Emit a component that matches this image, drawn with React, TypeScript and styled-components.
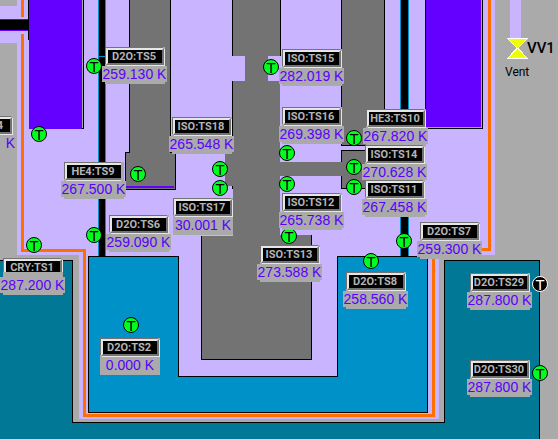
import React from "react";
import styled, { createGlobalStyle, css } from "styled-components";

const color = {
  panel: "#aaaaaa",
  vacuum: "#c8b4ff",
  shield: "#6400ff",
  heat: "#ff6e00",
  steel: "#737373",
  water: "#007896",
  heavy: "#0091c8",
  ok: "#00ff1e",
  valve: "#f0ff00",
};

const GlobalStyle = createGlobalStyle`
  body {
    margin: 0;
    background: ${color.panel};
  }
`;

const Synoptic = styled.main`
  position: relative;
  min-height: 100vh;
  overflow: hidden;
  background: ${color.panel};
  font-family: "Liberation Sans", Arial, sans-serif;
`;

const Drawing = styled.svg`
  display: block;
`;

const Sensor = styled.section<{ $x: number; $y: number }>`
  position: absolute;
  left: ${(p) => p.$x}px;
  top: ${(p) => p.$y}px;
  display: flex;
  flex-direction: column;
  width: 60px;
  height: 37px;
  background: ${color.panel};
`;

const NamePlate = styled.button<{ $cut?: "right" | "bottom"; $end?: boolean }>`
  box-sizing: border-box;
  flex: none;
  height: 17px;
  margin: 1px 1px 0 1px;
  padding: 0 ${(p) => (p.$end ? 7 : 2)}px 0 0;
  border: 2px solid;
  border-color: #e6e6e6 #737373 #737373 #e6e6e6;
  background: #000;
  box-shadow: -1px -1px #737373, 1px 1px #e6e6e6;
  color: #b4b4b4;
  font: bold 11px/13px Roboto, "Liberation Sans", sans-serif;
  text-align: ${(p) => (p.$end ? "right" : "center")};
  white-space: nowrap;
  ${(p) => p.$cut === "right" && css`clip-path: inset(-1px 2px -1px -1px);`}
  ${(p) => p.$cut === "bottom" && css`clip-path: inset(-1px -1px 4px -1px);`}
`;

const Value = styled.output<{ $wide: boolean; $end?: boolean }>`
  height: 16px;
  margin: 1px ${(p) => (p.$wide ? "-2px 0 -3px" : "0 0 0")};
  background: ${color.panel};
  color: #5a00ff;
  font: 14px/16px "Liberation Sans", Arial, sans-serif;
  text-align: ${(p) => (p.$end ? "right" : "center")};
  white-space: nowrap;
`;

const Marker = styled.span<{ $x: number; $y: number; $off?: boolean }>`
  position: absolute;
  left: ${(p) => p.$x - 8}px;
  top: ${(p) => p.$y - 8}px;
  box-sizing: border-box;
  width: 16px;
  height: 16px;
  border: 1px solid ${(p) => (p.$off ? "#fff" : "#000")};
  border-radius: 50%;
  background: ${(p) => (p.$off ? "#000" : color.ok)};
  color: ${(p) => (p.$off ? "#fff" : "#000")};
  font-size: 15px;
  line-height: 15px;
  text-align: center;
`;

const ValveName = styled.strong`
  position: absolute;
  left: 527px;
  top: 40px;
  font-family: Roboto, "Liberation Sans", sans-serif;
  font-size: 15px;
  font-weight: 500;
  line-height: 17px;
`;

const ValveRole = styled.span`
  position: absolute;
  left: 505px;
  top: 64px;
  font-family: Roboto, "Liberation Sans", sans-serif;
  font-size: 12px;
  line-height: 16px;
`;

type SensorData = {
  name: string;
  value: string;
  x: number;
  y: number;
  cut?: "right" | "bottom";
  end?: boolean;
};

const sensors: SensorData[] = [
  { name: "D2O:TS5", value: "259.130 K", x: 105, y: 47 },
  { name: "4", value: "K", x: -47, y: 116, end: true },
  { name: "ISO:TS15", value: "282.019 K", x: 282, y: 49 },
  { name: "ISO:TS16", value: "269.398 K", x: 282, y: 107 },
  { name: "ISO:TS18", value: "265.548 K", x: 172, y: 117 },
  { name: "HE3:TS10", value: "267.820 K", x: 366, y: 109 },
  { name: "ISO:TS14", value: "270.628 K", x: 365, y: 145 },
  { name: "ISO:TS11", value: "267.458 K", x: 365, y: 180 },
  { name: "HE4:TS9", value: "267.500 K", x: 64, y: 162, cut: "right" },
  { name: "D2O:TS6", value: "259.090 K", x: 109, y: 215 },
  { name: "ISO:TS17", value: "30.001 K", x: 173, y: 198 },
  { name: "ISO:TS12", value: "265.738 K", x: 282, y: 193 },
  { name: "ISO:TS13", value: "273.588 K", x: 260, y: 245 },
  { name: "D2O:TS7", value: "259.300 K", x: 420, y: 222 },
  { name: "D2O:TS8", value: "258.560 K", x: 346, y: 272 },
  { name: "D2O:TS29", value: "287.800 K", x: 470, y: 273 },
  { name: "D2O:TS30", value: "287.800 K", x: 470, y: 360 },
  { name: "CRY:TS1", value: "287.200 K", x: 3, y: 258, cut: "bottom" },
  { name: "D2O:TS2", value: "0.000 K", x: 100, y: 338 },
];

const markers: { x: number; y: number; off?: boolean }[] = [
  { x: 94, y: 66 },
  { x: 39, y: 134 },
  { x: 138, y: 174 },
  { x: 94, y: 235 },
  { x: 34, y: 245 },
  { x: 271, y: 67 },
  { x: 287, y: 153 },
  { x: 354, y: 138 },
  { x: 220, y: 169 },
  { x: 220, y: 188 },
  { x: 287, y: 184 },
  { x: 354, y: 167 },
  { x: 354, y: 187 },
  { x: 289, y: 236 },
  { x: 404, y: 241 },
  { x: 371, y: 261 },
  { x: 131, y: 325 },
  { x: 540, y: 284, off: true },
  { x: 540, y: 373 },
];

function Vessel() {
  return (
    <Drawing width="558" height="439" viewBox="0 0 558 439" shapeRendering="crispEdges" aria-hidden="true">
      {/* light-water pool */}
      <path d="M0 260H73V422H444V260H540V439H0Z" fill="#000" />
      <path d="M0 261H72V423H445V261H539V439H0Z" fill={color.water} />

      {/* vacuum jacket */}
      <path d="M17 0H495V255H439V419H79V255H17V43H0V6H17Z" fill={color.vacuum} />
      <path d="M510 0H521V38H510Z" fill={color.vacuum} />

      {/* heat shield */}
      <path d="M21 0H24V17H21ZM21 34H24V249H86V414H432V248H488V0H491V251H435V417H83V252H21Z" fill={color.heat} />

      {/* side magnets and feed pipe */}
      <path d="M0 19H29V31H0Z" fill={color.shield} />
      <path d="M0 20H29V30H0ZM28 0H29V40H28Z" fill="#000" />
      <path d="M83 0H84V129H82V128H83Z" fill="#000" />
      <path d="M82 0H83V128H82Z" fill={color.panel} />
      <path d="M29 0H82V129H29Z" fill={color.shield} />
      <path d="M425 0H483V129H425Z" fill="#000" />
      <path d="M426 0H482V128H426Z" fill={color.panel} />
      <path d="M426 0H481V127H426Z" fill={color.shield} />

      {/* coolant lines */}
      <path d="M98 0H106V256H98ZM400 0H409V256H400Z" fill={color.heavy} />
      <path d="M99 0H105V56H99ZM99 57H105V256H99ZM401 0H408V256H401Z" fill="#000" />

      {/* heavy-water tank */}
      <path d="M88 256H179V376H337V256H428V413H88Z" fill="#000" />
      <path d="M89 257H178V377H338V257H427V412H89Z" fill={color.heavy} />

      {/* left helium column */}
      <path d="M129 0H171V152H176V190H125V152H129Z" fill="#000" />
      <path d="M130 0H170V153H175V189H126V153H130Z" fill={color.steel} />
      <path d="M126 186H174V188H126Z" fill={color.shield} />

      {/* central column */}
      <path d="M232 0H281V235H312V360H201V236H233V189H232Z" fill="#000" />
      <path d="M233 0H280V235H311V359H202V236H233Z" fill={color.steel} />
      <path d="M225 136H233V186H225ZM280 162H342V176H280Z" fill={color.steel} />
      <path d="M280 81H281V162H280ZM280 176H281V235H280Z" fill={color.vacuum} />
      <path d="M232 56H245V81H232ZM268 56H281V81H268Z" fill={color.vacuum} />

      {/* right helium column */}
      <path d="M341 0H385V146H341ZM341 150H385V189H341Z" fill="#000" />
      <path d="M342 0H384V145H342ZM342 151H384V188H342Z" fill={color.steel} />
      <path d="M341 162H342V176H341Z" fill={color.steel} />

      {/* vent valve */}
      <path d="M507 38H528L519 48L528 59H507L516 48Z" fill="#fff" />
      <path d="M509 39H526L517.500 48ZM517.500 49L526 58H509Z" fill={color.valve} />
    </Drawing>
  );
}

export default function App() {
  return (
    <>
      <GlobalStyle />
      <Synoptic>
        <Vessel />
        {markers.map((m) => (
          <Marker key={`${m.x}-${m.y}`} $x={m.x} $y={m.y} $off={m.off}>
            T
          </Marker>
        ))}
        {sensors.map((s) => (
          <Sensor key={s.name} $x={s.x} $y={s.y}>
            <NamePlate type="button" id={s.name} $cut={s.cut} $end={s.end}>
              {s.name}
            </NamePlate>
            <Value $wide={s.end || s.value.length > 8} $end={s.end} aria-labelledby={s.name}>
              {s.value}
            </Value>
          </Sensor>
        ))}
        <ValveName>VV1</ValveName>
        <ValveRole>Vent</ValveRole>
      </Synoptic>
    </>
  );
}
